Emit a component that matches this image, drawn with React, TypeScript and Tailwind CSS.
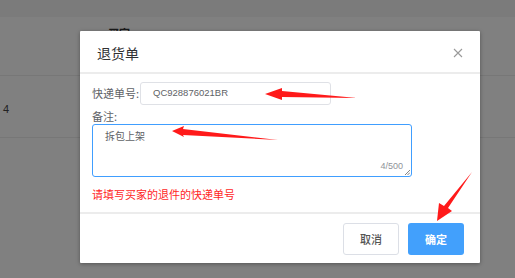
import React from "react";

const CJK = { fontFamily: '"Noto Sans CJK SC", "Noto Sans", sans-serif' };
const LAT = { fontFamily: '"Liberation Sans", "Noto Sans CJK SC", sans-serif' };

export default function App() {
  return (
    <div className="relative w-[515px] h-[278px] overflow-hidden bg-[#808080]" style={CJK}>
      {/* background page under overlay */}
      <div className="h-[17px] bg-[#7b7b7b]" />
      <div className="h-[59px] border-b border-[#777777] pl-[108px] pt-[8px] text-[11px] font-bold text-[#1a1a1a]">买家</div>
      <div className="h-[62px] border-b border-[#777777] flex items-center pl-[3px] pt-[6px] text-[11px] text-[#222]" style={LAT}>4</div>

      {/* dialog */}
      <div className="absolute left-[80px] top-[31px] w-[400px] bg-white shadow-[0_1px_4px_rgba(0,0,0,0.35)] rounded-[1px]">
        <div className="h-[43px] border-b-2 border-[#ececec] flex items-center justify-between pl-[17px] pr-[17px] pt-[3px]">
          <span className="text-[14px] text-[#303133] leading-none">退货单</span>
          <svg width="10" height="10" viewBox="0 0 10 10" className="mb-[1px]">
            <path d="M1 1 L9 9 M9 1 L1 9" stroke="#9a9a9a" strokeWidth="1.1" fill="none" />
          </svg>
        </div>
        <div className="px-[12px] pt-[8px]">
          <div className="flex items-center">
            <span className="w-[48px] text-[11px] text-[#606266] leading-none">快递单号:</span>
            <div className="w-[191px] h-[23px] border border-[#dfe1e6] rounded-[3px] flex items-center pl-[12px] text-[9.5px] text-[#606266]" style={LAT}>
              QC928876021BR
            </div>
          </div>
          <div className="mt-[4px] h-[15px] flex items-center text-[11px] text-[#606266] leading-none">备注:</div>
          <div className="relative w-[320px] h-[53px] border border-[#409eff] rounded-[3px] pl-[12px] pt-[6px] text-[10px] text-[#606266] leading-none">
            拆包上架
            <span className="absolute right-[8px] bottom-[5px] text-[9px] text-[#909399] leading-none" style={LAT}>4/500</span>
            <svg width="6" height="6" viewBox="0 0 6 6" className="absolute right-[1px] bottom-[1px]">
              <path d="M1 6 L6 1 M3.5 6 L6 3.5" stroke="#666" strokeWidth="0.8" />
            </svg>
          </div>
          <div className="h-[35px] flex items-center text-[11px] text-[#ff1f1f] leading-none">请填写买家的退件的快递单号</div>
        </div>
        <div className="border-t-2 border-[#ececec] flex justify-end gap-[9px] pr-[16px] pt-[9px] pb-[8px]">
          <button className="w-[56px] h-[32px] border border-[#dcdfe6] rounded-[3px] bg-white text-[11px] font-medium text-[#555]">取消</button>
          <button className="w-[56px] h-[32px] rounded-[3px] bg-[#42a0fc] text-[11px] font-bold text-white">确定</button>
        </div>
      </div>

      {/* red annotation arrows */}
      <svg className="absolute left-0 top-0" width="515" height="278" viewBox="0 0 515 278">
        <polygon points="265,94 282,88 282,91 357,98 282,97 282,100" fill="#ff1a1a" />
        <polygon points="172,131 184,126 183,129 278,140 183,135 184,137" fill="#ff1a1a" />
        <polygon points="437,221 439,203 444,206 472,172 448,208 452,211" fill="#ff1a1a" />
      </svg>
    </div>
  );
}
